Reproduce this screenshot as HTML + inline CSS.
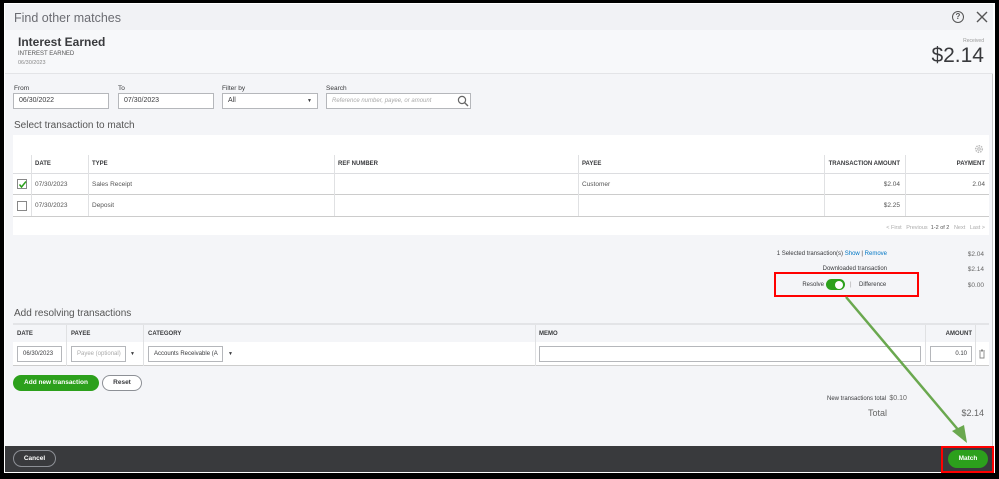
<!DOCTYPE html>
<html><head><meta charset="utf-8"><style>
*{box-sizing:border-box;margin:0;padding:0}
body{width:999px;height:479px;background:#fff;font-family:"Liberation Sans",sans-serif;color:#393a3d;position:relative;overflow:hidden}
.a{position:absolute;white-space:nowrap}
.frame{position:absolute;left:0;top:0;width:999px;height:479px;border:4px solid #000;border-bottom-width:6px;border-top-width:3px}
.main{position:absolute;left:5px;top:4px;width:988px;height:468px;background:#f4f5f8;border-right:1px solid #c8c8c8}
.inp{position:absolute;height:16px;background:#fff;border:1px solid #b5b7bb;font-size:7px;line-height:14px;padding-left:5px;color:#393a3d}
.lbl{font-size:6.5px;color:#393a3d}
.th{font-size:6px;font-weight:bold;color:#393a3d}
.td{font-size:6.5px;color:#555}
.vl{position:absolute;width:1px;background:#e0e1e3}
.hl{position:absolute;height:1px;background:#dcdde0}
</style></head><body>
<div class="main"></div>
<div class="a" style="left:5px;top:4px;width:988px;height:26px;background:#f1f2f5"></div>
<div class="a" style="left:14px;top:11px;font-size:12.5px;color:#6b6c72">Find other matches</div>
<div class="a" style="left:952px;top:11px;width:12px;height:12px;border:1.3px solid #555;border-radius:50%;font-size:8px;line-height:10px;text-align:center;color:#555;font-weight:bold">?</div>
<svg class="a" style="left:976px;top:11px" width="12" height="12"><path d="M1 1L11 11M11 1L1 11" stroke="#555" stroke-width="1.4"/></svg>
<div class="a" style="left:5px;top:30px;width:988px;height:44px;background:#f7f8fa;border-bottom:1px solid #e3e4e7"></div>
<div class="a" style="left:18px;top:35px;font-size:12px;font-weight:bold;color:#393a3d">Interest Earned</div>
<div class="a" style="left:18px;top:51px;font-size:6px;color:#555">INTEREST EARNED</div>
<div class="a" style="left:18px;top:60px;font-size:5.5px;color:#888">06/30/2023</div>
<div class="a" style="right:15px;top:38px;font-size:5px;color:#999">Received</div>
<div class="a" style="right:15px;top:44px;font-size:21px;color:#393a3d;font-weight:500">$2.14</div>
<div class="a lbl" style="left:14px;top:85px">From</div>
<div class="a lbl" style="left:118px;top:85px">To</div>
<div class="a lbl" style="left:222px;top:85px">Filter by</div>
<div class="a lbl" style="left:326px;top:85px">Search</div>
<div class="inp" style="left:13px;top:93px;width:96px">06/30/2022</div>
<div class="inp" style="left:118px;top:93px;width:96px">07/30/2023</div>
<div class="inp" style="left:222px;top:93px;width:96px">All<span style="position:absolute;right:5px;font-size:5px">▼</span></div>
<div class="inp" style="left:326px;top:93px;width:145px;color:#aaa;font-style:italic;font-size:6px">Reference number, payee, or amount</div>
<svg class="a" style="left:457px;top:95px" width="12" height="12"><circle cx="5" cy="5" r="3.6" fill="none" stroke="#666" stroke-width="1.2"/><path d="M7.6 7.6L11 11" stroke="#666" stroke-width="1.4"/></svg>
<div class="a" style="left:14px;top:120px;font-size:10px;color:#555">Select transaction to match</div>
<div class="a" style="left:13px;top:135px;width:976px;height:100px;background:#fff"></div>
<svg class="a" style="left:974px;top:144px" width="10" height="10"><circle cx="5" cy="5" r="3.3" fill="none" stroke="#bbb" stroke-width="1.5" stroke-dasharray="1.5 1"/><circle cx="5" cy="5" r="1.3" fill="none" stroke="#bbb"/></svg>
<div class="hl" style="left:13px;top:173px;width:976px"></div>
<div class="hl" style="left:13px;top:194px;width:976px;background:#ccc"></div>
<div class="hl" style="left:13px;top:216px;width:976px;background:#ccc"></div>
<div class="vl" style="left:31px;top:155px;height:61px"></div>
<div class="vl" style="left:88px;top:155px;height:61px"></div>
<div class="vl" style="left:334px;top:155px;height:61px"></div>
<div class="vl" style="left:578px;top:155px;height:61px"></div>
<div class="vl" style="left:824px;top:155px;height:61px"></div>
<div class="vl" style="left:905px;top:155px;height:61px"></div>
<div class="a th" style="left:35px;top:161px">DATE</div>
<div class="a th" style="left:92px;top:161px">TYPE</div>
<div class="a th" style="left:338px;top:161px">REF NUMBER</div>
<div class="a th" style="left:582px;top:161px">PAYEE</div>
<div class="a th" style="right:99px;top:161px">TRANSACTION AMOUNT</div>
<div class="a th" style="right:14px;top:161px">PAYMENT</div>
<div class="a" style="left:17px;top:179px;width:10px;height:10px;border:1px solid #888;background:#fff"></div>
<svg class="a" style="left:18px;top:180px" width="9" height="9"><path d="M1.5 4.5L3.5 7L8 1.5" fill="none" stroke="#2ca01c" stroke-width="1.5"/></svg>
<div class="a" style="left:17px;top:201px;width:10px;height:10px;border:1px solid #888;background:#fff"></div>
<div class="a td" style="left:35px;top:181px">07/30/2023</div>
<div class="a td" style="left:92px;top:181px">Sales Receipt</div>
<div class="a td" style="left:582px;top:181px">Customer</div>
<div class="a td" style="right:99px;top:181px">$2.04</div>
<div class="a td" style="right:14px;top:181px">2.04</div>
<div class="a td" style="left:35px;top:202px">07/30/2023</div>
<div class="a td" style="left:92px;top:202px">Deposit</div>
<div class="a td" style="right:99px;top:202px">$2.25</div>
<div class="a" style="right:14px;top:225px;font-size:5.5px;color:#aaa">&lt; First &nbsp; Previous &nbsp;<span style="color:#555">1-2 of 2</span> &nbsp; Next &nbsp; Last &gt;</div>
<div class="a" style="right:112px;top:251px;font-size:6px;color:#393a3d">1 Selected transaction(s) <span style="color:#0077c5">Show</span> | <span style="color:#0077c5">Remove</span></div>
<div class="a" style="right:15px;top:251px;font-size:6.5px;color:#666">$2.04</div>
<div class="a" style="right:112px;top:266px;font-size:6px">Downloaded transaction</div>
<div class="a" style="right:15px;top:266px;font-size:6.5px;color:#666">$2.14</div>
<div class="a" style="right:15px;top:282px;font-size:6.5px;color:#666">$0.00</div>
<div class="a" style="left:774px;top:272px;width:145px;height:25px;border:2.5px solid #f00"></div>
<div class="a" style="right:175px;top:282px;font-size:6px">Resolve</div>
<div class="a" style="left:826px;top:279px;width:19px;height:11px;border-radius:6px;background:#2ca01c"></div>
<div class="a" style="left:835px;top:280.5px;width:8px;height:8px;border-radius:50%;background:#fff"></div>
<div class="a" style="left:850px;top:282px;font-size:6px;color:#999">|</div>
<div class="a" style="left:859px;top:282px;font-size:6px">Difference</div>
<div class="a" style="left:14px;top:308px;font-size:10px;color:#555">Add resolving transactions</div>
<div class="a" style="left:13px;top:323px;width:976px;height:2px;background:#e3e4e7"></div>
<div class="a" style="left:13px;top:342px;width:976px;height:24px;background:#fff;border-bottom:1px solid #ccc"></div>
<div class="vl" style="left:66px;top:325px;height:41px"></div>
<div class="vl" style="left:143px;top:325px;height:41px"></div>
<div class="vl" style="left:535px;top:325px;height:41px"></div>
<div class="vl" style="left:925px;top:325px;height:41px"></div>
<div class="vl" style="left:975px;top:325px;height:41px"></div>
<div class="a th" style="left:17px;top:331px">DATE</div>
<div class="a th" style="left:71px;top:331px">PAYEE</div>
<div class="a th" style="left:148px;top:331px">CATEGORY</div>
<div class="a th" style="left:539px;top:331px">MEMO</div>
<div class="a th" style="right:27px;top:331px">AMOUNT</div>
<div class="inp" style="left:17px;top:346px;width:45px;font-size:6px">06/30/2023</div>
<div class="inp" style="left:71px;top:346px;width:55px;color:#aaa;font-size:6px">Payee (optional)</div>
<div class="a" style="left:130px;top:351px;font-size:5px">▼</div>
<div class="inp" style="left:148px;top:346px;width:75px;font-size:6px">Accounts Receivable (A</div>
<div class="a" style="left:228px;top:351px;font-size:5px">▼</div>
<div class="inp" style="left:539px;top:346px;width:382px"></div>
<div class="inp" style="left:930px;top:346px;width:42px;text-align:right;padding-right:4px;font-size:6px">0.10</div>
<svg class="a" style="left:978px;top:349px" width="8" height="10"><path d="M1 2H7M3 1H5M2 3V9H6V3" fill="none" stroke="#888" stroke-width="0.9"/></svg>
<div class="a" style="left:13px;top:375px;width:86px;height:16px;border-radius:8px;background:#2ca01c;color:#fff;font-size:6.5px;font-weight:bold;text-align:center;line-height:16px">Add new transaction</div>
<div class="a" style="left:102px;top:375px;width:40px;height:16px;border-radius:8px;border:1px solid #8d9096;background:#fff;font-size:6.5px;font-weight:bold;text-align:center;line-height:14px">Reset</div>
<div class="a" style="left:827px;top:395px;font-size:6px">New transactions total &nbsp;<span style="font-size:7px;color:#666">$0.10</span></div>
<div class="a" style="left:868px;top:408px;font-size:9px;color:#666">Total</div>
<div class="a" style="right:15px;top:408px;font-size:9px;color:#666">$2.14</div>
<div class="a" style="left:5px;top:446px;width:989px;height:26px;background:#393a3d"></div>
<div class="a" style="left:13px;top:450px;width:43px;height:17px;border-radius:9px;border:1px solid #8d9096;color:#fff;font-size:6.5px;font-weight:bold;text-align:center;line-height:15px">Cancel</div>
<div class="a" style="left:941px;top:446px;width:53px;height:27px;border:2.5px solid #f00"></div>
<div class="a" style="left:948px;top:450px;width:40px;height:18px;border-radius:9px;background:#2ca01c;color:#fff;font-size:6.5px;font-weight:bold;text-align:center;line-height:18px">Match</div>
<svg class="a" style="left:0;top:0" width="999" height="479"><path d="M846 297L960 432" stroke="#6aa84f" stroke-width="2.5"/><path d="M952 431L967 443L964 425Z" fill="#6aa84f"/></svg>
<div class="frame"></div>
</body></html>
